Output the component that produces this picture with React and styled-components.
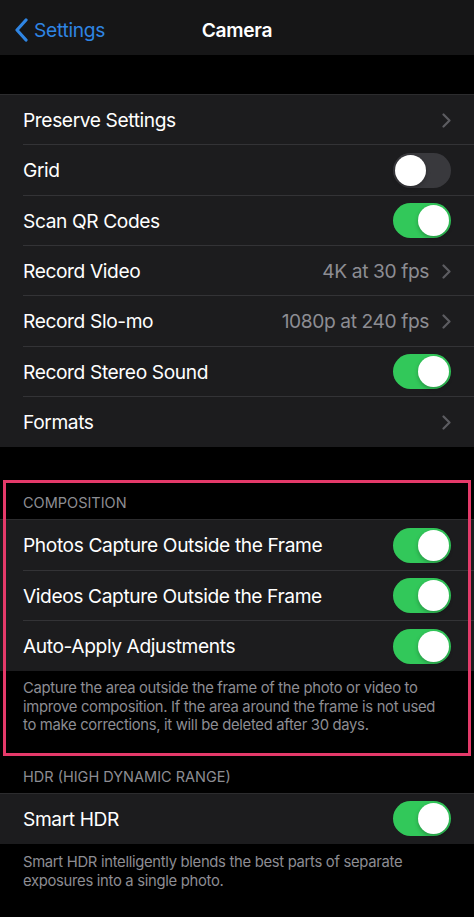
import React from 'react'
import styled, { createGlobalStyle } from 'styled-components'

const GlobalStyle = createGlobalStyle`
    html, body {
        margin: 0;
        padding: 0;
        background: #000;
    }
    body {
        font-family: Inter, "Noto Sans", "Liberation Sans", sans-serif;
        -webkit-font-smoothing: antialiased;
    }
`

const Page = styled.div`
    width: 474px;
    min-height: 917px;
    background: #000;
    color: #fff;
    overflow: hidden;
`

const NavBar = styled.div`
    height: 55px;
    background: #161617;
    display: grid;
    grid-template-columns: 1fr auto 1fr;
    align-items: center;
    padding: 5px 0 0;
    box-sizing: border-box;
`

const BackButton = styled.div`
    display: flex;
    align-items: center;
    gap: 5px;
    padding-left: 14px;
    color: #2f85e3;
    font-size: 19.2px;
    letter-spacing: -0.3px;
`

const Title = styled.div`
    font-size: 19.2px;
    font-weight: 600;
    letter-spacing: -0.3px;
`

const Spacer = styled.div`
    height: ${props => props.h}px;
`

const Group = styled.div`
    background: #1c1c1e;
    border-top: 1px solid #2c2c2e;
    margin-top: -1px;
`

const Row = styled.div`
    height: 50.33px;
    display: flex;
    align-items: center;
    padding: 0 23px;
    position: relative;
    box-sizing: border-box;
    &:not(:last-child)::after {
        content: '';
        position: absolute;
        left: 23px;
        right: 0;
        bottom: 0;
        height: 1px;
        background: #333336;
    }
`

const Label = styled.div`
    flex: 1;
    font-size: 19.2px;
    letter-spacing: -0.4px;
`

const Value = styled.div`
    color: #8d8d93;
    font-size: 19.2px;
    letter-spacing: -0.4px;
    margin-right: 13px;
`

const Header = styled.div`
    padding: ${props => props.top}px 23px 8px;
    font-size: 14.5px;
    line-height: 18px;
    color: #8d8d93;
`

const Footer = styled.div`
    padding: ${props => props.top}px 23px ${props => props.bottom}px;
    font-size: 14.8px;
    line-height: 18.5px;
    color: #8d8d93;
    letter-spacing: -0.3px;
`

const Highlight = styled.div`
    position: relative;
    &::after {
        content: '';
        position: absolute;
        top: 33px;
        bottom: 0;
        left: 3px;
        right: 3px;
        border: 3px solid #e53a6a;
        pointer-events: none;
    }
`

const Track = styled.div`
    width: 58px;
    height: 35px;
    border-radius: 18px;
    background: ${props => (props.on ? '#32c85a' : '#39393d')};
    display: flex;
    align-items: center;
    justify-content: ${props => (props.on ? 'flex-end' : 'flex-start')};
    padding: 2px;
    box-sizing: border-box;
    flex-shrink: 0;
`

const Knob = styled.div`
    width: 31px;
    height: 31px;
    border-radius: 50%;
    background: #fff;
    box-shadow: 0 2px 4px rgba(0, 0, 0, 0.25);
`

function Toggle({ on }) {
    return (
        <Track on={on ? 1 : 0}>
            <Knob />
        </Track>
    )
}

function Chevron() {
    return (
        <svg width="9" height="15" viewBox="0 0 9 15">
            <path d="M1.5 1.5 L7.5 7.5 L1.5 13.5" fill="none" stroke="#5c5c61" strokeWidth="2.2" strokeLinecap="round" strokeLinejoin="round" />
        </svg>
    )
}

function BackChevron() {
    return (
        <svg width="15" height="24" viewBox="0 0 15 24">
            <path d="M12 2 L3 12 L12 22" fill="none" stroke="#2f85e3" strokeWidth="3.2" strokeLinecap="round" strokeLinejoin="round" />
        </svg>
    )
}

function SettingRow({ label, value, link, toggle }) {
    return (
        <Row>
            <Label>{label}</Label>
            {value && <Value>{value}</Value>}
            {link && <Chevron />}
            {toggle !== undefined && <Toggle on={toggle} />}
        </Row>
    )
}

export default function App() {
    return (
        <Page>
            <GlobalStyle />
            <NavBar>
                <BackButton>
                    <BackChevron />
                    Settings
                </BackButton>
                <Title>Camera</Title>
                <div />
            </NavBar>
            <Spacer h={40} />
            <Group>
                <SettingRow label="Preserve Settings" link />
                <SettingRow label="Grid" toggle={false} />
                <SettingRow label="Scan QR Codes" toggle />
                <SettingRow label="Record Video" value="4K at 30 fps" link />
                <SettingRow label="Record Slo-mo" value="1080p at 240 fps" link />
                <SettingRow label="Record Stereo Sound" toggle />
                <SettingRow label="Formats" link />
            </Group>
            <Highlight>
                <Header top={47}>COMPOSITION</Header>
                <Group>
                    <SettingRow label="Photos Capture Outside the Frame" toggle />
                    <SettingRow label="Videos Capture Outside the Frame" toggle />
                    <SettingRow label="Auto-Apply Adjustments" toggle />
                </Group>
                <Footer top={8} bottom={21}>
                    Capture the area outside the frame of the photo or video to improve composition. If the area around the frame is not used to make corrections, it will be deleted after 30 days.
                </Footer>
            </Highlight>
            <Header top={12}>HDR (HIGH DYNAMIC RANGE)</Header>
            <Group>
                <SettingRow label="Smart HDR" toggle />
            </Group>
            <Footer top={9} bottom={20}>
                Smart HDR intelligently blends the best parts of separate exposures into a single photo.
            </Footer>
        </Page>
    )
}
